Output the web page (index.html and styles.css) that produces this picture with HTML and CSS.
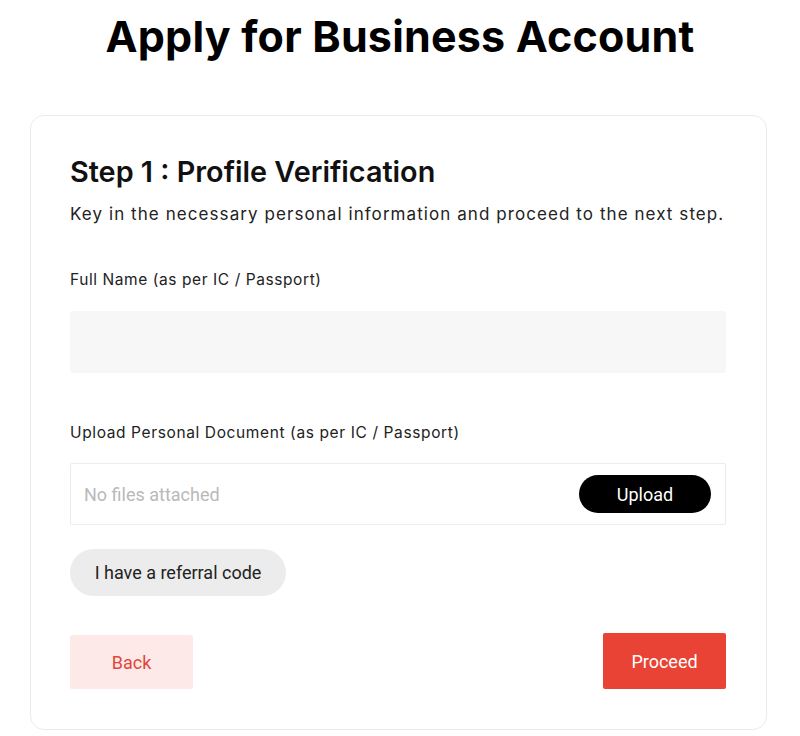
FILE: index.html
```html
<!DOCTYPE html>
<html>
<head>
<meta charset="utf-8">
<link rel="stylesheet" href="styles.css">
</head>
<body>
<h1 class="page-title">Apply for Business Account</h1>
<div class="card">
  <h2 class="step-title">Step 1 : Profile Verification</h2>
  <p class="step-desc">Key in the necessary personal information and proceed to the next step.</p>
  <label class="field-label">Full Name (as per IC / Passport)</label>
  <div class="text-input"></div>
  <label class="field-label upload-label">Upload Personal Document (as per IC / Passport)</label>
  <div class="upload-box">
    <span class="upload-placeholder">No files attached</span>
    <button class="upload-btn">Upload</button>
  </div>
  <button class="referral-btn">I have a referral code</button>
  <div class="actions">
    <button class="back-btn">Back</button>
    <button class="proceed-btn">Proceed</button>
  </div>
</div>
</body>
</html>
```
FILE: styles.css
```css
* { box-sizing: border-box; }
body {
  margin: 0;
  background: #fff;
  font-family: Inter, "Open Sans", sans-serif;
  color: #111;
}
.page-title {
  margin: 0;
  padding-top: 9px;
  text-align: center;
  font-size: 43px;
  line-height: 54px;
  font-weight: 700;
  letter-spacing: 0.2px;
  color: #000;
}
.card {
  margin: 52px 0 0 30px;
  width: 737px;
  border: 1px solid #ebebeb;
  border-radius: 14px;
  padding: 38px 40px 40px 39px;
}
.step-title {
  margin: 0;
  font-size: 28.8px;
  line-height: 36px;
  font-weight: 600;
  color: #111;
}
.step-desc {
  margin: 12px 0 0;
  font-size: 17px;
  line-height: 24px;
  letter-spacing: 1.07px;
  color: #222;
}
.field-label {
  display: block;
  margin-top: 43px;
  font-size: 15.5px;
  line-height: 22px;
  letter-spacing: 0.58px;
  color: #222;
}
.text-input {
  margin-top: 20px;
  height: 62px;
  background: #f7f7f7;
  border-radius: 2px;
}
.upload-label { margin-top: 49px; letter-spacing: 0.62px; }
.upload-box {
  margin-top: 19px;
  height: 62px;
  border: 1px solid #ececec;
  border-radius: 2px;
  display: flex;
  align-items: center;
  justify-content: space-between;
  padding: 0 14px 0 13px;
}
.upload-placeholder {
  font-family: Roboto, sans-serif;
  font-size: 18px;
  color: #b9b9b9;
}
.upload-btn {
  width: 132px;
  height: 38px;
  border: none;
  border-radius: 19px;
  background: #000;
  color: #fff;
  font-family: Roboto, sans-serif;
  font-size: 18px;
}
.referral-btn {
  display: block;
  margin-top: 24px;
  width: 216px;
  height: 47px;
  border: none;
  border-radius: 24px;
  background: #ececec;
  color: #222;
  font-family: Roboto, sans-serif;
  font-size: 18px;
}
.actions {
  margin-top: 37px;
  display: flex;
  justify-content: space-between;
  align-items: flex-end;
}
.back-btn {
  width: 123px;
  height: 54px;
  border: none;
  border-radius: 2px;
  background: #fdeae8;
  color: #e2463b;
  font-family: Roboto, sans-serif;
  font-size: 18px;
}
.proceed-btn {
  width: 123px;
  height: 56px;
  border: none;
  border-radius: 2px;
  background: #e84335;
  color: #fff;
  font-family: Roboto, sans-serif;
  font-size: 18px;
}
```
